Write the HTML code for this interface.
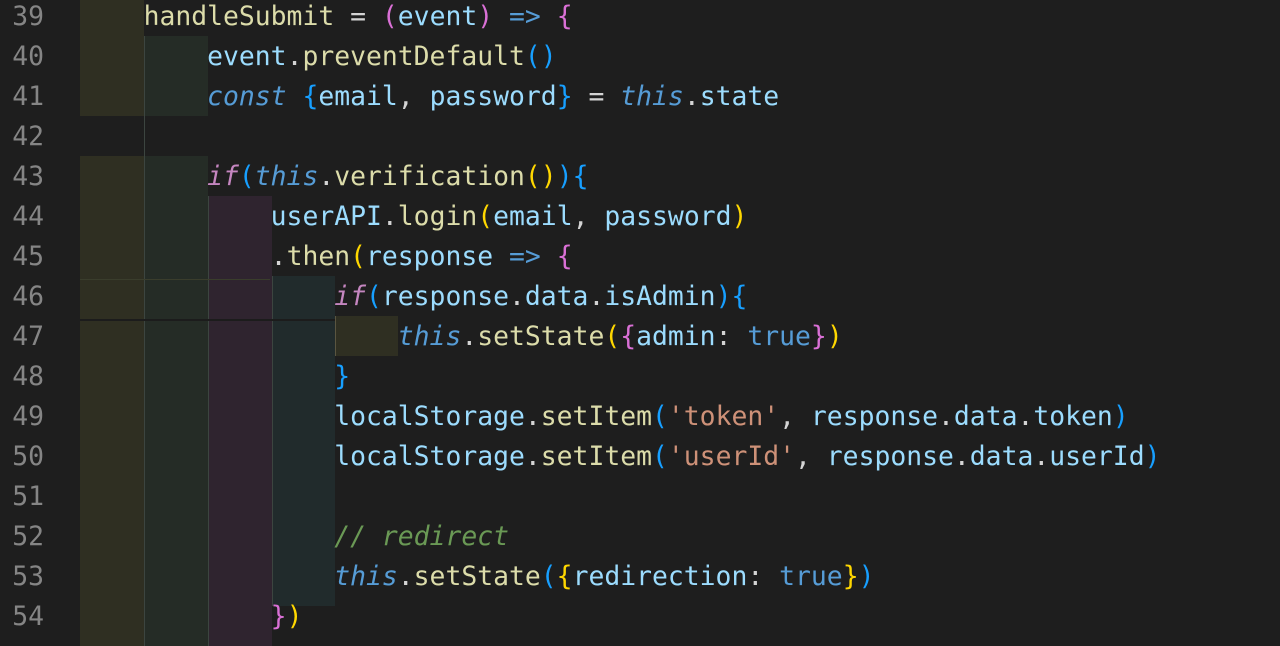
<!DOCTYPE html>
<html><head><meta charset="utf-8"><style>
html,body{margin:0;padding:0;background:#1e1e1e;width:1280px;height:640px;overflow:hidden}
.ln{position:absolute;left:0;width:44px;text-align:right;color:#858585;font:26.4px "DejaVu Sans Mono","Liberation Mono",monospace;line-height:40px}
.code{position:absolute;left:80px;white-space:pre;font:26.4px "DejaVu Sans Mono","Liberation Mono",monospace;line-height:40px;color:#d4d4d4}
.b{position:absolute;height:40px}
.o{background:#2f2f22}.g{background:#252c26}.p{background:#2f242f}.t{background:#212b2c}
.gl{position:absolute;width:1px;background:#3c4540}
.f{color:#dcdcaa}.v{color:#9cdcfe}.k{color:#569cd6;font-style:italic}.c{color:#c586c0;font-style:italic}
.kw{color:#569cd6}.s{color:#ce9178}.cm{color:#6a9955;font-style:italic}
.Y{color:#ffd700}.P{color:#da70d6}.B{color:#179fff}
</style></head><body>
<div class="b o" style="left:80px;width:64px;top:-4px;height:120px"></div>
<div class="b g" style="left:144px;width:64px;top:36px;height:80px"></div>
<div class="b o" style="left:80px;width:64px;top:156px;height:490px"></div>
<div class="b g" style="left:144px;width:64px;top:156px;height:490px"></div>
<div class="b p" style="left:208px;width:64px;top:196px;height:450px"></div>
<div class="b t" style="left:272px;width:63px;top:276px;height:330px"></div>
<div class="b o" style="left:335px;width:63px;top:316px;height:40px"></div>
<div class="gl" style="left:144px;top:36px;height:610px"></div>
<div class="gl" style="left:208px;top:196px;height:450px"></div>
<div class="gl" style="left:272px;top:276px;height:330px"></div>
<div class="gl" style="left:335px;top:316px;height:40px;background:#5a5540"></div>
<div style="position:absolute;left:80px;top:319px;width:255px;height:2px;background:#1c1c1c"></div>
<div style="position:absolute;left:80px;top:279px;width:190px;height:1px;background:#3a3d2c"></div>
<div class="ln" style="top:-3px">39<br>40<br>41<br>42<br>43<br>44<br>45<br>46<br>47<br>48<br>49<br>50<br>51<br>52<br>53<br>54</div>
<div class="code" style="top:-3px">    <span class="f">handleSubmit</span> = <span class="P">(</span><span class="v">event</span><span class="P">)</span> <span class="kw">=&gt;</span> <span class="P">{</span>
        <span class="v">event</span>.<span class="f">preventDefault</span><span class="B">()</span>
        <span class="k">const</span> <span class="B">{</span><span class="v">email</span>, <span class="v">password</span><span class="B">}</span> = <span class="k">this</span>.<span class="v">state</span>

        <span class="c">if</span><span class="B">(</span><span class="k">this</span>.<span class="f">verification</span><span class="Y">()</span><span class="B">){</span>
            <span class="v">userAPI</span>.<span class="f">login</span><span class="Y">(</span><span class="v">email</span>, <span class="v">password</span><span class="Y">)</span>
            .<span class="f">then</span><span class="Y">(</span><span class="v">response</span> <span class="kw">=&gt;</span> <span class="P">{</span>
                <span class="c">if</span><span class="B">(</span><span class="v">response</span>.<span class="v">data</span>.<span class="v">isAdmin</span><span class="B">){</span>
                    <span class="k">this</span>.<span class="f">setState</span><span class="Y">(</span><span class="P">{</span><span class="v">admin</span>: <span class="kw">true</span><span class="P">}</span><span class="Y">)</span>
                <span class="B">}</span>
                <span class="v">localStorage</span>.<span class="f">setItem</span><span class="B">(</span><span class="s">'token'</span>, <span class="v">response</span>.<span class="v">data</span>.<span class="v">token</span><span class="B">)</span>
                <span class="v">localStorage</span>.<span class="f">setItem</span><span class="B">(</span><span class="s">'userId'</span>, <span class="v">response</span>.<span class="v">data</span>.<span class="v">userId</span><span class="B">)</span>

                <span class="cm">// redirect</span>
                <span class="k">this</span>.<span class="f">setState</span><span class="B">(</span><span class="Y">{</span><span class="v">redirection</span>: <span class="kw">true</span><span class="Y">}</span><span class="B">)</span>
            <span class="P">}</span><span class="Y">)</span></div>
</body></html>
